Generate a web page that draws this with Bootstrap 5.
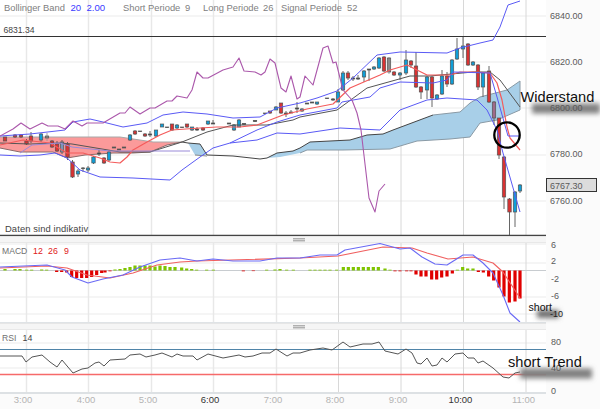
<!DOCTYPE html>
<html lang="de">
<head>
<meta charset="utf-8">
<title>Chart</title>
<link href="https://cdn.jsdelivr.net/npm/bootstrap@5.3.0/dist/css/bootstrap.min.css" rel="stylesheet">
<style>
html,body{margin:0;background:#fbfbfb;overflow:hidden}
.chart-frame{width:600px;height:409px;background:#fbfbfb;font-family:"Liberation Sans",Arial,sans-serif}
.chart-frame svg{display:block;width:600px;flex:none}
.pane-main{height:236px}
.pane-macd{height:80px;overflow:visible;position:relative;z-index:1}
.pane-rsi{height:64px;overflow:visible;position:relative;z-index:1}
.chart-split{width:546px;height:7px;background:#f5f5f5;border-top:1px solid #e6e6e6;border-bottom:1px solid #e8e8e8;padding-right:241px;flex:none}
.split-grip{width:12px;height:4px;margin-top:1px;background:repeating-linear-gradient(to bottom,#b0b0b0 0,#b0b0b0 1px,#d4d4d4 1px,#d4d4d4 2px)}
.time-axis{height:15px;flex:none}
.time-axis svg{height:15px}
svg text{font-family:"Liberation Sans",Arial,sans-serif}
.leg{font-size:9.4px;fill:#808080}
.leg-sm{font-size:8.6px;fill:#707070}
.leg-blue{font-size:9.6px;fill:#3a3aff}
.leg-red{font-size:8.8px;fill:#e02020}
.leg-dark{font-size:8.8px;fill:#444}
.axis-lab{font-size:9px;fill:#5a5a5a}
.note{font-size:14.6px;fill:#111}
.note-s{font-size:10.6px;fill:#111}
.tick{font-size:9.5px;fill:#b4b4b4;text-anchor:middle}
.tick-d{font-size:9.5px;fill:#333;text-anchor:middle}
</style>
</head>
<body>
<div class="chart-frame d-flex flex-column">
  <svg class="pane-main" id="pMain" viewBox="0 0 600 236">
    <defs>
      <filter id="bl" x="-30%" y="-120%" width="160%" height="340%"><feGaussianBlur stdDeviation="2.6"/></filter>
    </defs>
    <g id="mainG"></g>
    <text class="leg" x="4" y="11">Bollinger Band</text><text class="leg-blue" x="70.5" y="11">20</text><text class="leg-blue" x="86.5" y="11">2.00</text>
    <text class="leg" x="123" y="11">Short Periode</text><text class="leg" x="185" y="11">9</text>
    <text class="leg" x="203" y="11">Long Periode</text><text class="leg" x="263" y="11">26</text>
    <text class="leg" x="281" y="11">Signal Periode</text><text class="leg" x="347" y="11">52</text>
    <text x="3.5" y="33" style="font-size:8.6px;fill:#444">6831.34</text>
    <text x="5" y="232" style="font-size:9.4px;fill:#444;letter-spacing:.1px">Daten sind indikativ</text>
    <text class="axis-lab" x="550" y="18.500">6840.00</text>
    <text class="axis-lab" x="550" y="65">6820.00</text>
    <rect x="532" y="103.500" width="68" height="10" fill="#808080" filter="url(#bl)"/>
    <text class="axis-lab" x="550" y="111">6800.00</text>
    <text class="axis-lab" x="550" y="157">6780.00</text>
    <text class="axis-lab" x="550" y="203.500">6760.00</text>
    <rect x="546.500" y="178.500" width="50" height="13" fill="#dcdcdc" stroke="#333"/>
    <text class="axis-lab" x="550" y="188.500">6767.30</text>
    <text class="note" x="520.500" y="102">Widerstand</text>
    <circle cx="507" cy="135" r="12.700" fill="none" stroke="#000" stroke-width="2.300"/>
  </svg>
  <div class="chart-split"><div class="split-grip ms-auto"></div></div>
  <svg class="pane-macd" id="pMacd" viewBox="0 243 600 80">
    <g id="macdG"></g>
    <text class="leg-sm" x="2" y="254">MACD</text>
    <text class="leg-red" x="33" y="254">12</text><text class="leg-red" x="48" y="254">26</text><text class="leg-red" x="64" y="254">9</text>
    <text class="axis-lab" x="551" y="247.500">6</text>
    <text class="axis-lab" x="551" y="264">2</text>
    <text class="axis-lab" x="551" y="281.500">-2</text>
    <text class="axis-lab" x="551" y="299">-6</text>
    <rect x="537" y="310" width="22" height="8" fill="#707070" filter="url(#bl)"/>
    <text class="axis-lab" x="550" y="316.500" style="fill:#222">-10</text>
    <text class="note-s" x="528.500" y="311">short</text>
  </svg>
  <div class="chart-split"><div class="split-grip ms-auto"></div></div>
  <svg class="pane-rsi" id="pRsi" viewBox="0 330 600 64">
    <g id="rsiG"></g>
    <text class="leg-sm" x="2" y="341">RSI</text><text class="leg-dark" x="22.500" y="341">14</text>
    <text class="axis-lab" x="551" y="345">80</text>
    <rect x="520" y="368.500" width="72" height="10" fill="#808080" filter="url(#bl)"/>
    <text class="axis-lab" x="551" y="370.500">40</text>
    <text class="note" x="508" y="366.500">short Trend</text>
    <text class="axis-lab" x="551" y="394">0</text>
  </svg>
  <div class="time-axis">
    <svg viewBox="0 394 600 15">
      <text class="tick" x="23" y="402.500">3:00</text><text class="tick" x="86" y="402.500">4:00</text>
      <text class="tick" x="148" y="402.500">5:00</text><text class="tick-d" x="210" y="402.500">6:00</text>
      <text class="tick" x="273" y="402.500">7:00</text><text class="tick" x="335" y="402.500">8:00</text>
      <text class="tick" x="398" y="402.500">9:00</text><text class="tick-d" x="460.500" y="402.500">10:00</text>
      <text class="tick" x="523.500" y="402.500">11:00</text>
    </svg>
  </div>
</div>
<script>
function P(a,c,w,extra){return '<polyline fill="none" stroke="'+c+'" stroke-width="'+(w||1)+'" stroke-linejoin="round" points="'+a.map(function(p){return p.join(',')}).join(' ')+'" '+(extra||'')+'/>';}
function A(a,f,s){return '<polygon fill="'+f+'" stroke="'+(s||'none')+'" points="'+a.map(function(p){return p.join(',')}).join(' ')+'"/>';}
function L(x1,y1,x2,y2,c,w){return '<line x1="'+x1+'" y1="'+y1+'" x2="'+x2+'" y2="'+y2+'" stroke="'+c+'" stroke-width="'+(w||1)+'"/>';}
function R(x,y,w,h,f,s){return '<rect x="'+x+'" y="'+y+'" width="'+w+'" height="'+h+'" fill="'+f+'"'+(s?' stroke="'+s+'" stroke-width=".7"':'')+'/>';}
function grid(y0,y1,hs){
  var o=R(0,y0,546,y1-y0,'#fff');
  hs.forEach(function(y){o+=L(0,y,546,y,'#ececec',1.2)});
  [[26,1.5],[88,1.5],[151,1.5],[213,1.5],[276,1.5]].forEach(function(v){o+=L(v[0]+.5,y0,v[0]+.5,y1,'#e8e8e8',v[1])});
  [338,400.5,463,525.5].forEach(function(x){o+=L(x+.5,y0,x+.5,y1,'#d8d8d8',1)});
  return o;
}
var m=grid(0,236,[16,62,108,155,201]);
m+=L(0,36.5,546,36.5,'#333',1);
m+=L(0,235.5,546,235.5,'#444',1.4);
/* red cloud */
m+=A([[0,137],[120,137],[153,142],[182,142],[167,145],[150,152],[133,153],[113,153],[85,155],[67,158],[53,152],[20,152],[0,148]],'#fb9a9a');
m+=P([[0,137],[120,137],[153,142],[182,142]],'#a8a8a8',1);
m+=P([[0,148],[20,152],[53,152],[67,158],[85,155],[113,153],[133,153],[150,152],[167,145],[182,142]],'#8a6a6a',1);
/* blue cloud */
m+=A([[188,143],[200,144],[207,155],[195,155]],'#a8cfe8');
m+=A([[267,158],[277,153],[293,151],[300,148],[310,142],[350,140],[367,135],[383,134],[393,130],[433,115],[460,112],[470,103],[480,97],[507,90],[520,81],[520,110],[497,120],[480,123],[470,137],[450,139],[417,141],[390,149],[343,150],[307,150],[300,153],[280,157]],'#a8cfe8');
m+=P([[300,153],[307,150],[343,150],[390,149],[417,141],[450,139],[470,137],[480,123],[497,120],[520,110],[520,81],[507,90],[480,97],[470,103],[460,112],[433,115]],'#8a9aa5',1);
m+=L(195,155,207,156,'#888',1);
/* candles: x,top,bottom,wickTop,wickBottom,colour */
var B='#0f9ed8',Q='#d93232',G='#8a8a8a';
var C=[[5,137,141,137,141,Q],[15,135,137,134,138,Q],[21,135,137,134,138,Q],[26.5,141,144,139,145,Q],[31,136,141,132,143,Q],[41,134,140,133,142,B],[47,136,138,133,141,G],[52,141,147,140,148,Q],[57,144,151,141,152,Q],[62,142,152,140,154,'#7a96b8'],[67.5,144,157,142,160,Q],[72.500,162,177,160,178,Q],[78,171,174,169,177,B],[83,168,168.5,167,172,'#333'],[88,168,170,166,172,B],[93.500,157,163,156,164,B],[99,153,154,150,156,'#222'],[104,158,163,157,164,Q],[109,152,160,150,161,B],[114,147,148,147,148,'#555'],[119,149,150,149,150,'#555'],[124,147,148,147,148,'#555'],[130,135,140,134,141,B],[135,131,134,130,135,Q],[140,131,131.500,131,131.500,'#444'],[145,134,136,133,137,Q],[150,134,135,131,137,'#333'],[156,130,136,130,137,B],[162,124,127,124,127,B],[167,127,127.600,127,128,'#555'],[172,124,130,124,131,Q],[177,125,128,124,129,B],[182,127,127.600,127,128,'#555'],[187,124,127,124,128,Q],[192,127,130,127,131,B],[197,129,130,127,131,'#333'],[203,128,130,127,131,Q],[208,121,124,121,125,B],[213,123,124,120,124,'#333'],[229,123,124,123,124,'#444'],[234,125,130,124,131,B],[239,120,127,119,127,B],[244,123.500,124.500,123,125,'#444'],[255,120.500,121.500,120,122,'#444'],[265,113,113.600,113,114,'#444'],[270,111,113,111,114,Q],[276,107,110,106,110,B],[281,103,113,103,114,Q],[286,113,114,111,117,'#333'],[291,112,113,110,113,'#444'],[297,108,109,102,113,'#333'],[302,109,111,108,112,B],[307,103,104,103,104,'#444'],[312,102,103,102,103,'#444'],[317,102,104,102,105,B],[327,98,98.600,98,99,'#444'],[333,99,100,98,101,'#444'],[338,92,102,89,102,B],[343,73,90,71,91,B],[348,73,78,71,80,Q],[353,78,79,76,81,'#444'],[358,78,79,75,80,'#444'],[364,71,77,70,82,B],[369,69,70,69,81,'#333'],[374,67,69,66,70,B],[379,58,68,57,69,B],[384,57,71,56,72,Q],[389,58,72,57,74,G],[394,72,75,71,76,Q],[400,73,75,72,80,B],[406,60,73,50,75,B],[411,61,65,60,68,Q],[416,66,87,52,88,Q],[421,87,92,86,99,Q],[427,77,90,76,99,B],[432,77,98,76,107,Q],[437,95,99,94,100,B],[442,76,94,70,95,B],[447,76,84,72,87,Q],[452,60,84,59,85,B],[457,49,59,38,60,B],[463,46,49,37,58,B],[468,44,65,43,66,Q],[473,62,65,61,66,B],[478,65,87,64,90,Q],[483,73,87,72,97,B],[489,71,102,66,103,Q],[494,102,118,101,125,'#a06a8a'],[499,118,155,118,159,Q],[504,157,197,156,209,Q],[509.500,199,212,198,235,Q],[515,192,212,191,227,B],[520,185,191,184,193,B]];
C.forEach(function(c){var gw=(c[5]==G)?'#999':'#555';
  m+=L(c[0],c[3],c[0],c[4],gw,.9);
  m+=R(c[0]-1.7,c[1],3.4,Math.max(c[2]-c[1],.6),c[5],'#555');
});
/* indicator lines */
var black=[[0,143],[30,144],[60,143],[72,144],[120,152],[150,152],[182,142],[207,132],[233,125],[267,125],[293,120],[300,117],[337,110],[367,88],[410,76],[430,76],[473,72],[490,72],[500,80],[520,107]];
var kumo=[[182,142],[188,143],[200,144],[207,155],[233,156],[260,159],[267,158],[277,153],[293,151],[300,148],[310,142],[350,140],[367,135],[383,134],[393,130],[433,115]];
m+=P(kumo,'#444',1);
m+=P(black,'#555',1);
m+=P([[0,145],[23,140],[50,143],[67,153],[83,153],[100,158],[110,162],[120,163],[127,157],[133,150],[147,142],[160,135],[172,130],[200,128],[217,127],[240,127],[257,125],[283,115],[307,109],[333,104],[350,88],[380,75],[390,70],[407,65],[427,75],[450,75],[460,72],[477,72],[490,73],[497,83],[502,100],[507,127],[510,138],[520,150]],'#f45b5b',1.2);
var blue='#5a5af5';
m+=P([[0,136],[30,134],[65,130],[73,122],[90,119],[103,122],[123,127],[147,123],[163,115],[183,112],[207,114],[233,118],[260,117],[277,108],[300,103],[317,98],[337,91],[353,78],[377,55],[400,52],[447,53],[460,48],[480,43],[493,40],[500,27],[508,5],[520,1]],blue,1);
m+=P([[0,155],[20,156],[40,155],[55,153],[67,158],[80,170],[100,177],[133,178],[170,180],[182,170],[200,157],[213,148],[230,143],[257,140],[277,133],[300,134],[340,128],[380,130],[400,110],[427,100],[447,98],[477,100],[487,110],[493,122],[497,130],[503,153],[520,212]],blue,1);
m+=P([[20,153],[32,145],[60,143],[72,147],[110,151],[135,151],[190,151]],'#9a8ad8',1);
m+=P([[230,143],[257,130],[277,122],[300,115],[337,108],[342,102],[370,97],[380,88],[400,82],[433,83],[447,80],[453,72],[490,73],[497,97],[508,136],[520,136]],blue,1);
m+=P([[0,136],[13,129],[21,123],[30,129],[42,123],[48,126],[58,126],[65,129],[73,121],[82,126],[87,123],[103,123],[120,113],[125,113],[130,107],[140,114],[150,108],[155,108],[167,101],[172,101],[177,96],[187,98],[192,90],[197,72],[203,78],[208,78],[223,70],[233,67],[239,58],[244,71],[255,72],[261,75],[265,72],[270,59],[275,63],[281,88],[286,92],[291,76],[297,99],[300,97],[305,76],[313,85],[323,48],[328,46],[333,63],[336,62],[343,90],[352,100],[357,113],[361,130],[369,198],[375,212],[379,191],[385,184]],'#ab58ab',1.1);
document.getElementById('mainG').innerHTML=m;

/* MACD */
var d=grid(243,323,[244,263,297,314]);
d+=L(0,270.5,546,270.5,'#c8ccd0',1);
var g='#7fc400',r='#e00000',H=[];
[[15,1.5],[45,1.5],[60,1.5],[80,.8],[95,.8],[125,1],[140,.8],[345,1],[360,1.500],[375,2.500],[390,3.500],[405,5],[420,5],[435,5],[450,5],[465,4],[480,5],[495,4.500],[510,3.500],[525,3.500],[545,3],[560,2],[575,1.500],[590,.8],[620,.8],[640,.8],[800,.8],[825,1],[840,1.500],[860,.8],[880,.8]].forEach(function(v){H.push([v[0]/3,v[1]])});
[[170,-1.500],[185,-1.500],[200,-2],[215,-6.500],[230,-7.500],[245,-7.500],[260,-7.500],[275,-6.500],[290,-4.500],[305,-2.500],[315,-2],[330,-.8],[730,-.8],[760,-.6]].forEach(function(v){H.push([v[0]/3,v[1]])});
[[30,.8],[45,.8],[60,.8],[75,.8],[90,.8],[110,.8],[130,3.500],[145,3.500],[160,3.500],[175,3.500],[190,3.500],[205,3.500],[220,3.500],[235,3.500],[255,2],[270,.8],[285,-.8],[300,-.8],[320,-.8],[333,-.8],[348,-4],[363,-6],[378,-6],[395,-9],[410,-9],[425,-7],[441,-6],[457,-3],[472,.8],[488,3.500],[503,2],[519,2],[535,-1.500],[550,-2],[566,-6],[581,-10],[597,-17],[612,-26],[628,-32],[645,-31],[660,-28]].forEach(function(v){H.push([300+v[0]/3,v[1]])});
H.forEach(function(v){var h=Math.abs(v[1]);d+=R(v[0]-1.6,v[1]>0?270.5-h:270.5,3.2,h,v[1]>0?g:r)});
d+=P([[0,268],[47,266],[67,268],[87,275],[110,278],[133,273],[157,265],[180,262],[197,261],[300,258],[338,256],[383,247],[412,248],[427,253],[448,259],[473,257],[493,263],[503,272],[520,298]],'#f06060',1.1);
d+=P([[0,267],[47,265],[65,270],[72,277],[88,283],[103,279],[123,275],[140,267],[160,260],[180,258],[197,261],[213,259],[233,261],[260,261],[277,258],[300,258],[320,255],[337,255],[345,250],[380,243.500],[400,249],[410,248],[422,257],[435,264],[447,265],[463,255],[473,255],[483,263],[493,273],[503,295],[510,313],[520,322]],'#6a6af5',1.1);
d+=L(0,322.500,546,322.500,'#dfe3e6',1);
document.getElementById('macdG').innerHTML=d;

/* RSI */
var s=grid(330,392,[343,368]);
s+=L(0,349.500,546,349.500,'#4f84a8',1.1);
s+=L(0,374.500,546,374.500,'#f66a6a',1.3);
s+=R(0,392,546,2,'#dde1e4');
s+=P([[0,356],[22,356],[26,362],[32,357],[42,355],[50,362],[57,367],[62,360],[73,373],[82,369],[88,368],[95,363],[99,362],[104,366],[110,360],[125,359],[130,355],[140,354],[146,357],[155,355],[162,353],[172,357],[177,354],[183,356],[193,356],[197,360],[208,354],[223,358],[239,355],[245,357],[253,356],[262,353],[270,353],[276,349],[287,356],[293,353],[300,353],[310,350],[323,348],[332,350],[343,342],[350,347],[363,344],[372,344],[379,342],[385,351],[398,354],[406,349],[412,353],[417,363],[421,364],[427,358],[432,366],[437,365],[442,358],[447,362],[455,354],[463,353],[468,358],[474,358],[478,363],[483,361],[493,368],[503,377],[509,378],[515,373],[520,372]],'#555',1);
document.getElementById('rsiG').innerHTML=s;
</script>
<script src="https://cdn.jsdelivr.net/npm/bootstrap@5.3.0/dist/js/bootstrap.bundle.min.js"></script>
</body>
</html>
